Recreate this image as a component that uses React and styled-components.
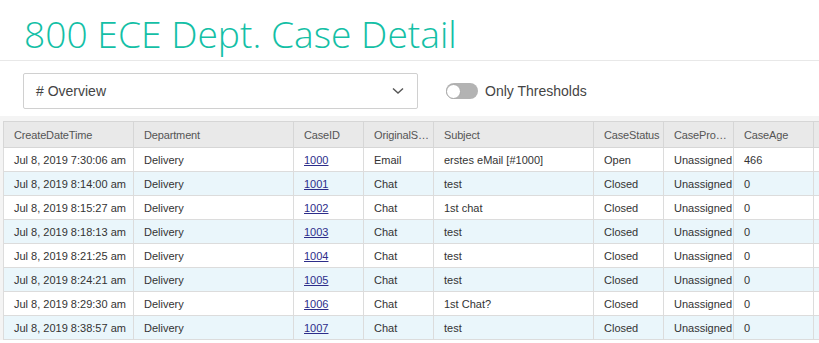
import React from "react";
import styled, { createGlobalStyle } from "styled-components";

const Global = createGlobalStyle`
  * {
    box-sizing: border-box;
  }
  body {
    margin: 0;
    background: #fff;
    font-family: "Liberation Sans", Arial, sans-serif;
    overflow: hidden;
  }
`;

const Page = styled.div`
  width: 819px;
  height: 343px;
  overflow: hidden;
`;

const Header = styled.div`
  height: 61px;
  border-bottom: 1px solid #e8e8e8;
  padding: 6px 0 0 24px;
  display: flex;
  align-items: center;
`;

const Title = styled.h1`
  margin: 0;
  font-family: "Open Sans", sans-serif;
  font-weight: 300;
  font-size: 37.2px;
  color: #14bfa6;
`;

const Controls = styled.div`
  display: flex;
  align-items: center;
  height: 55px;
  padding: 12px 0 7px 23px;
  gap: 28px;
`;

const Select = styled.div`
  width: 395px;
  height: 36px;
  border: 1px solid #d0d0d0;
  border-radius: 2px;
  display: flex;
  align-items: center;
  justify-content: space-between;
  padding: 0 13px 0 12px;
  font-size: 14px;
  color: #444;
`;

const ToggleWrap = styled.label`
  display: flex;
  align-items: center;
  gap: 7px;
  font-size: 14px;
  color: #444;
`;

const Track = styled.span`
  width: 32px;
  height: 16px;
  border-radius: 8px;
  background: ${(p) => (p.on ? "#14bfa6" : "#b3b3b3")};
  display: flex;
  align-items: center;
  justify-content: ${(p) => (p.on ? "flex-end" : "flex-start")};
`;

const Knob = styled.span`
  width: 15px;
  height: 15px;
  border-radius: 50%;
  background: #fff;
  border: 1px solid #a8a8a8;
`;

const Band = styled.div`
  background: #f4f4f4;
  padding: 5px 0 0 3px;
`;

const Table = styled.table`
  border-collapse: collapse;
  table-layout: fixed;
  width: 900px;
  font-size: 11px;
  color: #333;
  background: #fff;
`;

const Th = styled.th`
  height: 26px;
  background: #e9e9e9;
  border: 1px solid #d6d6d6;
  text-align: left;
  font-weight: normal;
  color: #555;
  padding: 0 1px 0 10px;
  letter-spacing: -0.15px;
  white-space: nowrap;
  overflow: hidden;
  text-overflow: ellipsis;
`;

const Td = styled.td`
  height: 24px;
  border: 1px solid #dcdcdc;
  padding: 0 2px 0 10px;
  white-space: nowrap;
  overflow: hidden;
`;

const Tr = styled.tr`
  background: ${(p) => (p.alt ? "#eaf6fb" : "#fff")};
`;

const Link = styled.a`
  color: #2d2d8a;
  text-decoration: underline;
`;

const cols = [
  ["CreateDateTime", 130],
  ["Department", 160],
  ["CaseID", 70],
  ["OriginalSource", 70],
  ["Subject", 160],
  ["CaseStatus", 70],
  ["CaseProgress", 70],
  ["CaseAge", 80],
  ["", 90],
];

const rows = [
  ["Jul 8, 2019 7:30:06 am", "1000", "Email", "erstes eMail [#1000]", "Open", "466"],
  ["Jul 8, 2019 8:14:00 am", "1001", "Chat", "test", "Closed", "0"],
  ["Jul 8, 2019 8:15:27 am", "1002", "Chat", "1st chat", "Closed", "0"],
  ["Jul 8, 2019 8:18:13 am", "1003", "Chat", "test", "Closed", "0"],
  ["Jul 8, 2019 8:21:25 am", "1004", "Chat", "test", "Closed", "0"],
  ["Jul 8, 2019 8:24:21 am", "1005", "Chat", "test", "Closed", "0"],
  ["Jul 8, 2019 8:29:30 am", "1006", "Chat", "1st Chat?", "Closed", "0"],
  ["Jul 8, 2019 8:38:57 am", "1007", "Chat", "test", "Closed", "0"],
];

const Chevron = () => (
  <svg width="12" height="8" viewBox="0 0 12 8">
    <path d="M1 1.5 L6 6 L11 1.5" fill="none" stroke="#555" strokeWidth="1.4" />
  </svg>
);

export default function App() {
  return (
    <Page>
      <Global />
      <Header>
        <Title>800 ECE Dept. Case Detail</Title>
      </Header>
      <Controls>
        <Select>
          <span># Overview</span>
          <Chevron />
        </Select>
        <ToggleWrap>
          <Track>
            <Knob />
          </Track>
          Only Thresholds
        </ToggleWrap>
      </Controls>
      <Band>
        <Table>
          <colgroup>
            {cols.map(([n, w], i) => (
              <col key={i} style={{ width: w }} />
            ))}
          </colgroup>
          <thead>
            <tr>
              {cols.map(([n], i) => (
                <Th key={i}>{n}</Th>
              ))}
            </tr>
          </thead>
          <tbody>
            {rows.map((r, i) => (
              <Tr key={i} alt={i % 2 === 1}>
                <Td>{r[0]}</Td>
                <Td>Delivery</Td>
                <Td>
                  <Link>{r[1]}</Link>
                </Td>
                <Td>{r[2]}</Td>
                <Td>{r[3]}</Td>
                <Td>{r[4]}</Td>
                <Td>Unassigned</Td>
                <Td>{r[5]}</Td>
                <Td />
              </Tr>
            ))}
          </tbody>
        </Table>
      </Band>
    </Page>
  );
}
